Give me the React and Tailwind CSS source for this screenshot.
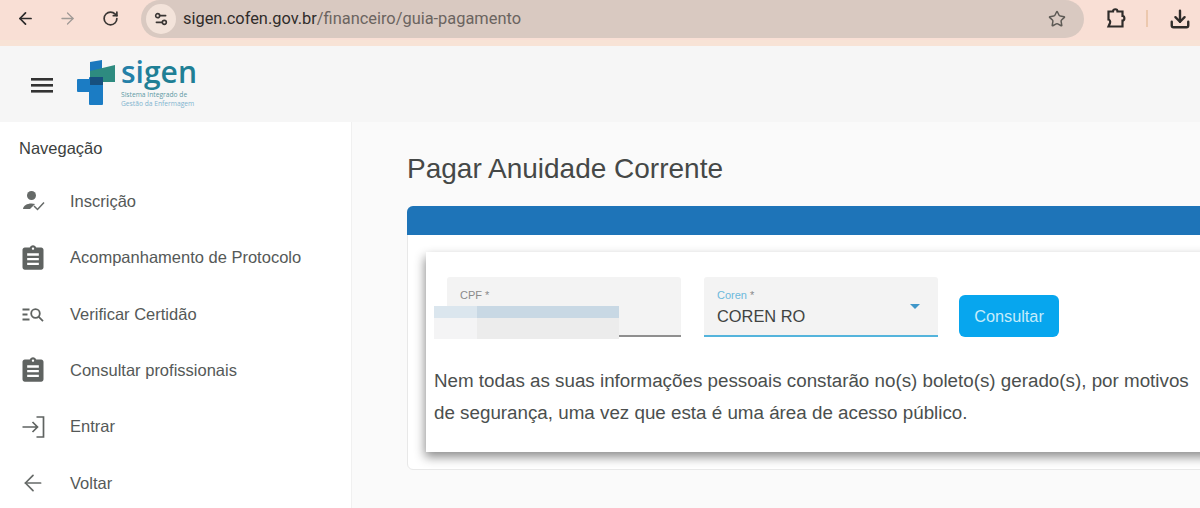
import { ArrowLeft, ArrowRight, Download, RotateCw, Settings2, Star } from 'lucide-react';

const font = 'font-["Liberation_Sans",Arial,sans-serif]';

function ClipboardIcon() {
  return (
    <svg width="28" height="28" viewBox="0 0 24 24" fill="#5f6361">
      <path d="M19 3h-4.2C14.4 1.8 13.3 1 12 1s-2.4.8-2.8 2H5c-1.1 0-2 .9-2 2v15c0 1.1.9 2 2 2h14c1.1 0 2-.9 2-2V5c0-1.1-.9-2-2-2zm-7 0c.6 0 1 .4 1 1s-.4 1-1 1-1-.4-1-1 .4-1 1-1zm5 15H7v-2h10v2zm0-4H7v-2h10v2zm0-4H7V8h10v2z" />
    </svg>
  );
}

function PersonCheckIcon() {
  return (
    <svg width="28" height="24" viewBox="0 0 28 24" fill="#666a68" className="ml-[1px]">
      <circle cx="11.500" cy="6.500" r="4.500" />
      <path d="M3 20c.3-3.400 4-5.500 8.500-5.500 1.400 0 2.600.2 3.600.5L10 20H3z" />
      <path d="M14 17l3.500 3.500 6.500-7" fill="none" stroke="#666a68" strokeWidth="1.500" />
    </svg>
  );
}

function SearchListIcon() {
  return (
    <svg width="26" height="24" viewBox="0 0 26 24" fill="none" stroke="#5f6361" strokeWidth="1.800" className="ml-[1px]">
      <path d="M2.500 7.500h7M2.500 12.500h5M2.500 17.500h7" />
      <circle cx="15.500" cy="11.500" r="4.300" />
      <path d="M18.500 14.700l4.500 4.500" />
    </svg>
  );
}

function LoginIcon() {
  return (
    <svg width="26" height="24" viewBox="0 0 26 24" fill="none" stroke="#5f6361" strokeWidth="1.700" className="ml-[2px]">
      <path d="M1.500 12h15M11.500 7l5 5-5 5" />
      <path d="M15.500 2h7v20h-7" />
    </svg>
  );
}

function BackIcon() {
  return <ArrowLeft size={26} strokeWidth={1.600} color="#666a68" className="ml-[1px]" />;
}

function ExtensionIcon() {
  return (
    <svg width="22" height="22" viewBox="0 0 22 22" fill="none" stroke="#2f2c2a" strokeWidth="2.200">
      <path d="M3.500 3.500h4.500c0-3 4.500-3 4.500 0h5v4.500c2.500 0 2.500 4.500 0 4.500v6h-14l1.500-3.500c.8-2-.8-3.500-1.500-3.500v-8z" />
    </svg>
  );
}

function MenuIcon() {
  return (
    <svg width="22" height="15" viewBox="0 0 22 15" fill="#333">
      <rect y="0" width="22" height="2.600" />
      <rect y="6" width="22" height="2.600" />
      <rect y="12" width="22" height="2.600" />
    </svg>
  );
}

function Logo() {
  return (
    <div className="flex items-start">
      <svg width="40" height="48" viewBox="0 0 40 48" className="mt-[9px]">
        <path d="M13 3l12-2v11H13z" fill="#1c78bd" />
        <path d="M13 12l25-6v17H13z" fill="#2e8b80" />
        <rect x="0" y="20" width="26" height="13" rx="1" fill="#1b7cc4" />
        <rect x="12" y="18" width="14" height="28" rx="1" fill="#1b7cc4" />
        <rect x="13" y="18" width="13" height="8" fill="#17507f" />
      </svg>
      <div className="ml-[4px] flex flex-col">
        <span className='mt-[7px] text-[30px] leading-[30px] font-semibold text-[#1f7f95] font-["Open_Sans",sans-serif]'>
          <span className="text-[#2480a8]">si</span>gen
        </span>
        <span className='mt-[3px] text-[6.700px] leading-[9px] text-[#5f9aa5] font-["Open_Sans",sans-serif]'>Sistema Integrado de</span>
        <span className='text-[6.700px] leading-[9px] text-[#7fb4cf] font-["Open_Sans",sans-serif]'>Gestão da Enfermagem</span>
      </div>
    </div>
  );
}

const navItems = [
  { label: 'Inscrição', icon: <PersonCheckIcon /> },
  { label: 'Acompanhamento de Protocolo', icon: <ClipboardIcon /> },
  { label: 'Verificar Certidão', icon: <SearchListIcon /> },
  { label: 'Consultar profissionais', icon: <ClipboardIcon /> },
  { label: 'Entrar', icon: <LoginIcon /> },
  { label: 'Voltar', icon: <BackIcon /> },
];

export default function App() {
  return (
    <div className={`flex h-[508px] w-[1200px] flex-col overflow-hidden bg-[#fafafa] ${font}`}>
      {/* browser bar */}
      <div className="flex h-[46px] shrink-0 items-start border-b-[6px] border-[#f8e3d6] bg-[#f9dfd5] pl-[16px]">
        <ArrowLeft size={19} strokeWidth={2.200} color="#2c2a2a" className="mt-[9px]" />
        <ArrowRight size={19} strokeWidth={1.600} color="#a09a96" className="ml-[23px] mt-[9px]" />
        <RotateCw size={17} strokeWidth={2.400} color="#3a3634" className="ml-[25px] mt-[10px]" />
        <div className="ml-[22px] flex h-[38px] w-[943px] items-center rounded-full bg-[#d9c9c1] pl-[5px]">
          <div className="flex h-[30px] w-[30px] items-center justify-center rounded-full bg-[#f3e3da]">
            <Settings2 size={16} strokeWidth={2.400} color="#3a3634" />
          </div>
          <span className='ml-[7px] font-["Roboto",sans-serif] text-[16.400px] text-[#302c2a]'>
            sigen.cofen.gov.br<span className="text-[#6b6460]">/financeiro/guia-pagamento</span>
          </span>
          <Star size={18} strokeWidth={2} color="#5d5a55" className="ml-auto mr-[18px]" />
        </div>
        <div className="ml-[21px] mt-[8px]"><ExtensionIcon /></div>
        <div className="ml-[19px] mt-[10px] h-[17px] w-[2px] bg-[#ecc8ae]" />
        <Download size={22} strokeWidth={2.600} color="#2f2c2a" className="ml-[21px] mt-[8px]" />
      </div>

      {/* app header */}
      <div className="flex h-[76px] shrink-0 items-start bg-[#f6f6f6] pl-[31px]">
        <div className="mt-[32px]"><MenuIcon /></div>
        <div className="ml-[24px] mt-[4px]"><Logo /></div>
      </div>

      <div className="flex min-h-0 flex-1">
        {/* sidebar */}
        <aside className="w-[352px] shrink-0 border-r border-[#f0f0f0] bg-white pl-[19px]">
          <p className="mt-[16px] text-[16.500px] leading-[20px] text-[#3c3f3e]">Navegação</p>
          <ul className="mt-[15px] flex flex-col">
            {navItems.map((item) => (
              <li key={item.label} className="flex h-[56.400px] items-center">
                <span className="flex w-[51px] shrink-0 items-center">{item.icon}</span>
                <span className="text-[16.500px] text-[#555958]">{item.label}</span>
              </li>
            ))}
          </ul>
        </aside>

        {/* content */}
        <main className="min-w-0 flex-1 pl-[55px]">
          <h1 className="mt-[31px] text-[28px] leading-[32px] whitespace-nowrap text-[#454847]">Pagar Anuidade Corrente</h1>
          <div className="mt-[21px] h-[264px] w-[840px] rounded-[6px] border border-[#e8e8e8] bg-white">
            <div className="-m-px h-[29px] rounded-t-[6px] bg-[#1e74b8]" />
            <div className="ml-[18px] mt-[18px] h-[200px] w-[830px] bg-white pl-[21px] shadow-[-1px_5px_10px_rgba(0,0,0,0.45)]">
              <div className="flex items-start pt-[25px]">
                <div className="relative h-[60px] w-[234px] rounded-t-[3px] border-b-2 border-[#8f8f8f] bg-[#f3f3f3] pl-[13px] pt-[11px]">
                  <p className="text-[11px] leading-[14px] text-[#8a8a8a]">CPF *</p>
                  <div className="absolute left-[-13px] top-[29px] h-[33px] w-[185px]">
                    <div className="flex h-[12px]">
                      <div className="w-[43px] bg-[#dbe6ee]" />
                      <div className="flex-1 bg-[#c8d8e4]" />
                    </div>
                    <div className="flex h-[21px]">
                      <div className="w-[43px] bg-[#f4f4f5]" />
                      <div className="flex-1 bg-[#ececec]" />
                    </div>
                  </div>
                </div>
                <div className="relative ml-[23px] h-[60px] w-[234px] rounded-t-[3px] border-b-2 border-[#54b4dc] bg-[#f3f3f3] pl-[13px] pt-[11px]">
                  <p className="text-[11px] leading-[14px] text-[#6cb9dc]">Coren <span className="text-[#8a8a8a]">*</span></p>
                  <p className="mt-[4px] text-[16.400px] leading-[20px] text-[#404342]">COREN RO</p>
                  <div className="absolute right-[18px] top-[27px] h-0 w-0 border-x-[5px] border-t-[5px] border-x-transparent border-t-[#3f97c9]" />
                </div>
                <button className="ml-[21px] mt-[18px] h-[42px] w-[100px] rounded-[6px] bg-[#07a6ee] text-[16.300px] text-[#c5ecfb]">Consultar</button>
              </div>
              <p className="ml-[-13px] mt-[28px] whitespace-nowrap text-[18.800px] leading-[32px] text-[#4b4f4e]">
                Nem todas as suas informações pessoais constarão no(s) boleto(s) gerado(s), por motivos
                <br />
                de segurança, uma vez que esta é uma área de acesso público.
              </p>
            </div>
          </div>
        </main>
      </div>
    </div>
  );
}
